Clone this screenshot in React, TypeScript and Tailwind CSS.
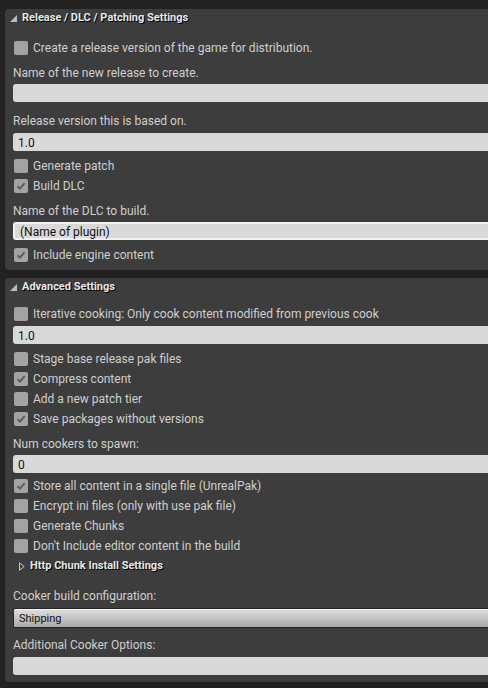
import React from 'react';

const font = { fontFamily: 'Roboto, "Liberation Sans", sans-serif' };

function Check({ checked, label }: { checked?: boolean; label: string }) {
  return (
    <div className="flex h-[20px] items-center pl-[9px] pt-[2px]">
      <div className="flex h-[14px] w-[14px] items-center justify-center rounded-[2px] bg-[#a3a3a3]">
        {checked && (
          <svg width="10" height="10" viewBox="0 0 10 10">
            <path d="M1.5 5.2 L4 7.6 L8.6 2.2" fill="none" stroke="#5c5c5c" strokeWidth="2" />
          </svg>
        )}
      </div>
      <span className="ml-[5px] whitespace-nowrap text-[12px] text-[#cfcfcf]">{label}</span>
    </div>
  );
}

function Label({ text, className = '' }: { text: string; className?: string }) {
  return (
    <div className={`flex h-[20px] items-center pl-[8px] pt-[2px] text-[12px] text-[#cfcfcf] whitespace-nowrap ${className}`}>
      {text}
    </div>
  );
}

function Input({ value = '', focused, className = '' }: { value?: string; focused?: boolean; className?: string }) {
  return (
    <div className={`ml-[8px] flex h-[18px] items-center rounded-l-[3px] bg-[#d9d9d9] pl-[5px] pt-[2px] text-[12px] text-[#111] ${focused ? 'border-2 border-r-0 border-[#f2f2f2] pl-[3px]' : ''} ${className}`}>
      {value}
    </div>
  );
}

function Header({ text }: { text: string }) {
  return (
    <div className="flex h-[16px] items-center pl-[5px] pt-[2px]">
      <svg width="7" height="7" viewBox="0 0 7 7" className="mt-[1px]">
        <path d="M7 0 L7 7 L0 7 Z" fill="#bdbdbd" />
      </svg>
      <span className="ml-[5px] text-[11px] font-bold text-[#e8e8e8] [text-shadow:1px_1px_0_#000]">{text}</span>
    </div>
  );
}

export default function App() {
  return (
    <div style={font} className="flex h-[688px] w-[488px] flex-col gap-[8px] overflow-hidden bg-[#222222] pl-[5px] pt-[9px]">
      <div className="flex flex-col rounded-l-[4px] bg-[#3d3d3d] pb-[6px]">
        <Header text="Release / DLC / Patching Settings" />
        <div className="mt-[12px]">
          <Check label="Create a release version of the game for distribution." />
        </div>
        <Label text="Name of the new release to create." className="mt-[5px]" />
        <Input className="mt-[2px]" />
        <Label text="Release version this is based on." className="mt-[8px]" />
        <Input value="1.0" className="mt-[3px]" />
        <div className="mt-[4px]">
          <Check label="Generate patch" />
          <Check checked label="Build DLC" />
        </div>
        <Label text="Name of the DLC to build." className="mt-[5px]" />
        <Input value="(Name of plugin)" focused className="mt-[2px]" />
        <div className="mt-[4px]">
          <Check checked label="Include engine content" />
        </div>
      </div>

      <div className="flex flex-col rounded-l-[4px] bg-[#3d3d3d] pb-[7px]">
        <Header text="Advanced Settings" />
        <div className="mt-[9px]">
          <Check label="Iterative cooking: Only cook content modified from previous cook" />
        </div>
        <Input value="1.0" className="mt-[3px]" />
        <div className="mt-[4px]">
          <Check label="Stage base release pak files" />
          <Check checked label="Compress content" />
          <Check label="Add a new patch tier" />
          <Check checked label="Save packages without versions" />
        </div>
        <Label text="Num cookers to spawn:" className="mt-[5px]" />
        <Input value="0" className="mt-[2px]" />
        <div className="mt-[2px]">
          <Check checked label="Store all content in a single file (UnrealPak)" />
          <Check label="Encrypt ini files (only with use pak file)" />
          <Check label="Generate Chunks" />
          <Check label="Don't Include editor content in the build" />
        </div>
        <div className="flex h-[20px] items-center pl-[14px] pt-[2px]">
          <svg width="6" height="9" viewBox="0 0 6 9">
            <path d="M0.5 0.8 L5.2 4.5 L0.5 8.2 Z" fill="none" stroke="#c8c8c8" strokeWidth="1" />
          </svg>
          <span className="ml-[5px] text-[11px] font-bold text-[#e8e8e8] [text-shadow:1px_1px_0_#000]">Http Chunk Install Settings</span>
        </div>
        <Label text="Cooker build configuration:" className="mt-[10px]" />
        <div className="ml-[8px] mt-[3px] flex h-[20px] items-center rounded-l-[2px] border border-r-0 border-[#262626] bg-gradient-to-b from-[#e0e0e0] to-[#a9a9a9] pl-[5px] pt-[2px] text-[11px] text-[#111] shadow-[inset_0_1px_0_#f4f4f4]">
          Shipping
        </div>
        <Label text="Additional Cooker Options:" className="mt-[6px]" />
        <Input className="mt-[3px]" />
      </div>
    </div>
  );
}
